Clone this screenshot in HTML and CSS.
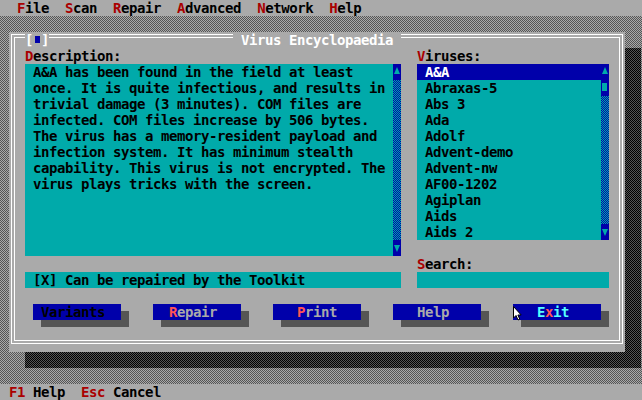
FILE: index.html
```html
<!DOCTYPE html>
<html lang="en">
<head>
  <meta charset="UTF-8" />
  <title>Virus Encyclopaedia</title>
  <link rel="stylesheet" href="styles.css">
</head>
<body>
  <nav class="menubar">
    <span><b class="hot">F</b>ile</span>
    <span><b class="hot">S</b>can</span>
    <span><b class="hot">R</b>epair</span>
    <span><b class="hot">A</b>dvanced</span>
    <span><b class="hot">N</b>etwork</span>
    <span><b class="hot">H</b>elp</span>
  </nav>

  <main class="desktop">
    <section class="dialog">
      <div class="frame">
        <div class="frame-inner">
          <div class="panes">
            <div class="pane">
              <div class="label"><b class="hot">D</b>escription:</div>
              <div class="desc">
                <p>A&amp;A has been found in the field at least once. It is quite infectious, and results in trivial damage (3 minutes). COM files are infected. COM files increase by 506 bytes. The virus has a memory-resident payload and infection system. It has minimum stealth capability. This virus is not encrypted. The virus plays tricks with the screen.</p>
                <div class="scrollbar">
                  <span class="arrow up"></span>
                  <span class="track"></span>
                  <span class="arrow down"></span>
                </div>
              </div>
              <div class="field check">[X] Can be repaired by the Toolkit</div>
            </div>

            <div class="pane">
              <div class="label"><b class="hot">V</b>iruses:</div>
              <div class="list">
                <ul>
                  <li class="selected">A&amp;A</li>
                  <li>Abraxas-5</li>
                  <li>Abs 3</li>
                  <li>Ada</li>
                  <li>Adolf</li>
                  <li>Advent-demo</li>
                  <li>Advent-nw</li>
                  <li>AF00-1202</li>
                  <li>Agiplan</li>
                  <li>Aids</li>
                  <li>Aids 2</li>
                </ul>
                <div class="scrollbar">
                  <span class="arrow up"></span>
                  <span class="thumb"></span>
                  <span class="track"></span>
                  <span class="arrow down"></span>
                </div>
              </div>
              <div class="label search-label"><b class="hot">S</b>earch:</div>
              <div class="field"></div>
            </div>
          </div>

          <div class="buttons">
            <button class="btn btn-off"> Variants</button>
            <button class="btn">  <b class="hot-btn">R</b>epair</button>
            <button class="btn">   <b class="hot-btn">P</b>rint</button>
            <button class="btn">   Help</button>
            <button class="btn btn-focus">   E<b class="hot-btn">x</b>it</button>
          </div>
        </div>
      </div>

      <header class="titlebar">
        <span class="closebox">[<i class="knob"></i>]</span>
        <span class="title"> Virus Encyclopaedia </span>
      </header>
    </section>
  </main>

  <footer class="statusbar"><b class="hot">F1</b> Help  <b class="hot">Esc</b> Cancel</footer>

  <svg class="cursor" width="10" height="16" viewBox="0 0 10 16">
    <path d="M0.5 0.5 L0.5 12 L3 9.5 L5 14 L6.8 13.2 L4.9 9 L8.2 9 Z" fill="#fff" stroke="#000" stroke-width="1" />
  </svg>
</body>
</html>
```

FILE: styles.css
```css
* {
  box-sizing: border-box;
}

body {
  position: relative;
  margin: 0;
  width: 642px;
  height: 400px;
  overflow: hidden;
  background: #aaa;
  color: #000;
  font: bold 14px/16px "DejaVu Sans Mono", monospace;
  letter-spacing: -0.428px;
}

b, i {
  font-weight: inherit;
  font-style: normal;
}

.hot {
  color: #a00;
}

/* top menu */
.menubar {
  display: flex;
  gap: 16px;
  height: 16px;
  padding-left: 17px;
}

/* dithered desktop */
.desktop {
  position: relative;
  z-index: 0;
  display: block;
  height: 368px;
  padding: 16px 0 0 9px;
  background: repeating-conic-gradient(#aaa 0 25%, #555 0 50%) 0 0 / 2px 2px;
}

.dialog {
  position: relative;
  width: 616px;
  height: 320px;
  padding: 2px 2px 8px;
  background: #aaa;
}

.dialog::after {
  content: "";
  position: absolute;
  left: 16px;
  top: 16px;
  width: 100%;
  height: 100%;
  z-index: -1;
  background: repeating-conic-gradient(#000 0 25%, #555 0 50%) 0 0 / 2px 2px;
}

.frame {
  height: 100%;
  border: 1px solid #fff;
  padding: 2px;
}

.frame-inner {
  height: 100%;
  border: 1px solid #fff;
  padding: 10px 10px 0;
}

.titlebar {
  position: absolute;
  top: 0;
  left: 0;
  right: 0;
  height: 16px;
  display: grid;
  grid-template-columns: 1fr auto 1fr;
  color: #fff;
  white-space: pre;
}

.closebox {
  justify-self: start;
  margin-left: 16px;
  background: #aaa;
}

.knob {
  display: inline-block;
  width: 5px;
  height: 7px;
  margin: 0 1px 0 2px;
  background: #00a;
  vertical-align: 2px;
}

.title {
  grid-column: 2;
  grid-row: 1;
  background: #aaa;
}

/* panes */
.panes {
  display: grid;
  grid-template-columns: 376px 192px;
  column-gap: 16px;
}

.pane {
  display: flex;
  flex-direction: column;
}

.label {
  height: 16px;
}

.search-label {
  margin-top: 16px;
}

.desc {
  display: flex;
  height: 192px;
  background: #0aa;
}

.desc p {
  flex: 1;
  margin: 0;
  padding-left: 8px;
}

.field {
  height: 16px;
  padding-left: 8px;
  background: #0aa;
}

.check {
  margin-top: 16px;
}

.list {
  display: flex;
  height: 176px;
  background: #0aa;
}

.list ul {
  flex: 1;
  margin: 0;
  padding: 0;
  list-style: none;
}

.list li {
  height: 16px;
  padding-left: 8px;
}

.list li.selected {
  background: #00a;
  color: #fff;
}

/* scrollbars */
.scrollbar {
  display: flex;
  flex-direction: column;
  width: 8px;
}

.track {
  flex: 1;
  background: repeating-conic-gradient(#0aa 0 25%, #00a 0 50%) 0 0 / 2px 2px;
}

.arrow,
.thumb {
  position: relative;
  height: 16px;
  background: #00a;
}

.arrow::before {
  content: "";
  position: absolute;
  left: 1px;
  width: 6px;
  height: 7px;
  background: #0aa;
}

.up::before {
  top: 3px;
  clip-path: polygon(50% 0, 100% 100%, 0 100%);
}

.down::before {
  top: 5px;
  clip-path: polygon(0 0, 100% 0, 50% 100%);
}

.thumb::before {
  content: "";
  position: absolute;
  left: 1px;
  top: 3px;
  width: 5px;
  height: 8px;
  background: #0aa;
}

/* buttons */
.buttons {
  display: flex;
  gap: 32px;
  margin-top: 16px;
  padding-left: 8px;
}

.btn {
  width: 88px;
  height: 16px;
  padding: 0;
  border: 0;
  background: #00a;
  color: #aaa;
  font: inherit;
  letter-spacing: inherit;
  text-align: left;
  white-space: pre;
  box-shadow: 8px 7px 0 #555;
}

.btn-off {
  color: #000;
}

.btn-focus {
  color: #5ff;
}

.hot-btn {
  color: #f55;
}

/* bottom status line */
.statusbar {
  height: 16px;
  padding-left: 9px;
  white-space: pre;
}

.cursor {
  position: absolute;
  left: 513px;
  top: 306px;
}
```
